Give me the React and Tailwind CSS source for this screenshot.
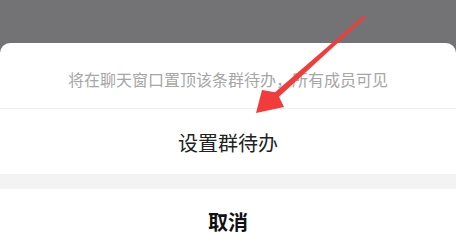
export default function App() {
  return (
    <div className="relative h-[246px] w-[456px] overflow-hidden bg-[#737375] font-['Noto_Sans_CJK_SC',sans-serif]">
      <div className="h-[43px]" />
      <div className="rounded-t-[10px] bg-white">
        <div className="flex h-[65px] items-center justify-center pt-[7px] text-[16px] leading-[20px] text-[#a6a6a6]">
          将在聊天窗口置顶该条群待办，所有成员可见
        </div>
        <div className="h-px bg-[#efefef]" />
        <div className="flex h-[65px] items-center justify-center pt-[3px] text-[20px] leading-[24px] text-[#222]">
          设置群待办
        </div>
        <div className="h-[15px] bg-[#f3f3f3]" />
        <div className="flex h-[66px] items-center justify-center text-[20px] font-bold leading-[24px] text-[#111]">
          取消
        </div>
      </div>
      <svg className="pointer-events-none absolute left-0 top-0" width="456" height="246" viewBox="0 0 456 246">
        <polygon
          points="256,113 284,107 279,96.7 366,17 364,15.3 275,92.3 262,90"
          fill="#f23b3b"
        />
      </svg>
    </div>
  );
}
